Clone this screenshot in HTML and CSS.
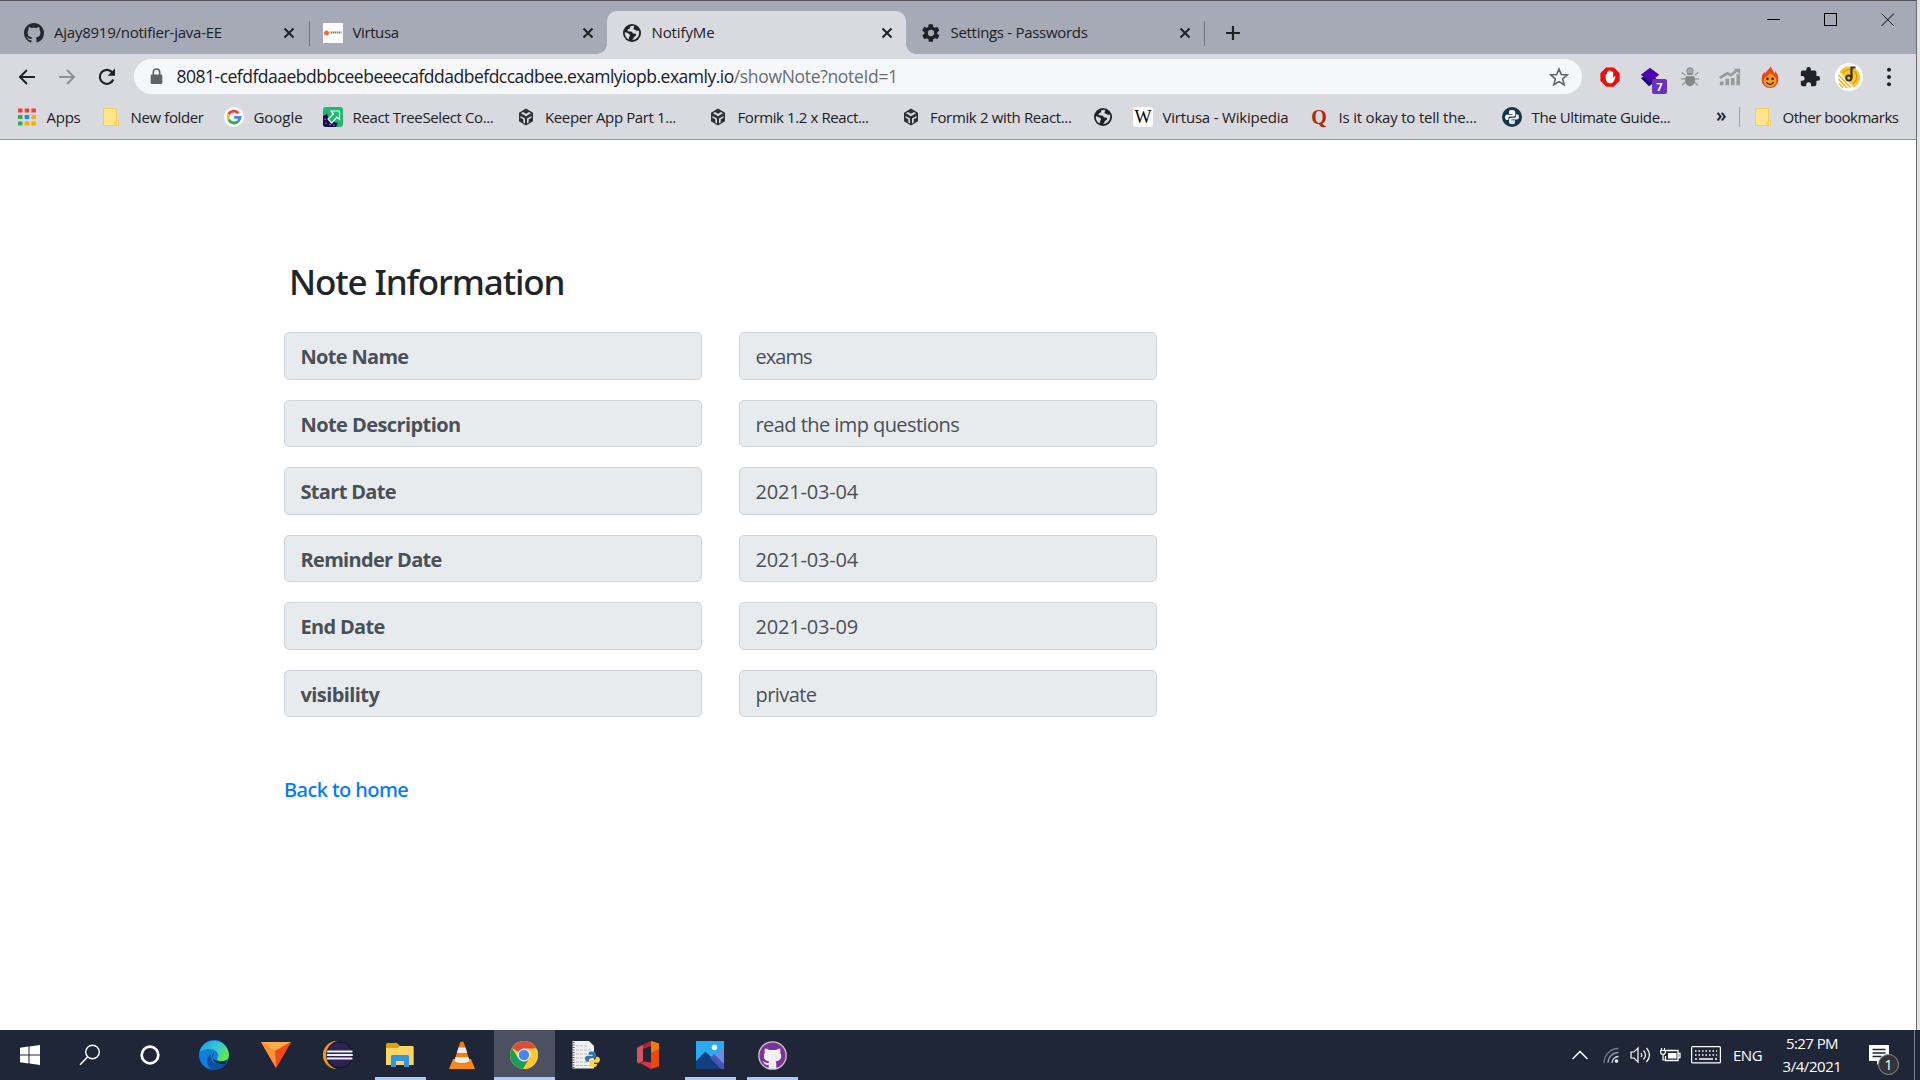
FILE: index.html
```
<!DOCTYPE html>
<html lang="en">
<head>
<meta charset="utf-8">
<title>NotifyMe</title>
<link rel="stylesheet" href="styles.css">
</head>
<body>
<svg class="defs" aria-hidden="true">
  <defs>
    <symbol id="cat" viewBox="0 0 16 16"><path d="M8 0C3.58 0 0 3.58 0 8c0 3.54 2.29 6.53 5.47 7.59.4.07.55-.17.55-.38 0-.19-.01-.82-.01-1.49-2.01.37-2.53-.49-2.69-.94-.09-.23-.48-.94-.82-1.13-.28-.15-.68-.52-.01-.53.63-.01 1.08.58 1.23.82.72 1.21 1.87.87 2.33.66.07-.52.28-.87.51-1.07-1.78-.2-3.64-.89-3.64-3.95 0-.87.31-1.59.82-2.15-.08-.2-.36-1.02.08-2.12 0 0 .67-.21 2.2.82.64-.18 1.32-.27 2-.27s1.36.09 2 .27c1.53-1.04 2.2-.82 2.2-.82.44 1.1.16 1.92.08 2.12.51.56.82 1.27.82 2.15 0 3.07-1.87 3.75-3.65 3.95.29.25.54.73.54 1.48 0 1.07-.01 1.93-.01 2.2 0 .21.15.46.55.38A8.01 8.01 0 0 0 16 8c0-4.42-3.58-8-8-8z"/></symbol>
    <symbol id="globe" viewBox="0 0 20 20"><circle cx="10" cy="10" r="9" fill="#202124"/><path d="M11 2.800c-2.600 0-3 .9-3 2 0 1.300-2 1-2.400 2.200-.3 1.100.8 1.500 2.200 1.500 1.900 0 2.900.5 2.900 1.900h2.100c.9 0 1.700.9 1.200 1.900-.6 1.200-2.100 1.300-2.500 2.700-.3 1.100-.9 2-2.300 2.100A7.200 7.200 0 0 0 17.200 10c0-1-.2-1.900-.6-2.800-.8.8-2 .9-2.800.1-.8-.9-2.200-.6-2.300-1.800-.1-.9.900-1.300.8-2.500z" fill="#d9dadf"/><path d="M2.900 9c1.300 1 3.500 1.200 4.600 2.200 1 .9.300 2-.3 2.700-.6.8 0 1.800-.4 2.600A7.200 7.200 0 0 1 2.900 9z" fill="#d9dadf"/></symbol>
    <symbol id="close" viewBox="0 0 12 12"><path d="M1.500 1.500l9 9m0-9l-9 9" stroke="#202124" stroke-width="2" fill="none"/></symbol>
    <symbol id="folder" viewBox="0 0 20 20"><path d="M2.500 1.500h13v12h2v5h-15z" fill="#ffe58c" stroke="#f2cd5c"/><path d="M15.500 13.500v5h-2v-3z" fill="#f7d566" stroke="#f2cd5c" stroke-width=".7"/></symbol>
    <symbol id="sandbox" viewBox="0 0 20 20"><path d="M10 1.500l7 4.200v8.600L10 18.500l-7-4.200V5.700z" fill="#303134"/><path d="M10 9.200L5 6.300l2-1.200 3 1.700 3-1.700 2 1.200zM9 11.500v5l-1.700-1v-3.200L4.500 10.700V9zM11 11.500v5l1.700-1v-3.200l2.800-1.600V9z" fill="#d9dadf"/></symbol>
  </defs>
</svg>

<div class="screen">
  <div class="window">
    <header class="tabstrip">
      <div class="tab">
        <svg class="favicon" viewBox="0 0 20 20"><use href="#cat" fill="#24292e"/></svg>
        <span class="tab-title sp-24">Ajay8919/notifier-java-EE</span>
        <svg class="tab-close"><use href="#close"/></svg>
      </div>
      <div class="tab tab-divided">
        <svg class="favicon" viewBox="0 0 20 20"><rect width="20" height="20" fill="#fff"/><circle cx="3.500" cy="10" r="2.500" fill="#ee6b3a"/><path d="M7.500 9.500h11" stroke="#777" stroke-width="2" stroke-dasharray="1.500 .6"/></svg>
        <span class="tab-title sp-40">Virtusa</span>
        <svg class="tab-close"><use href="#close"/></svg>
      </div>
      <div class="tab tab-active">
        <svg class="favicon"><use href="#globe"/></svg>
        <span class="tab-title sp-12">NotifyMe</span>
        <svg class="tab-close"><use href="#close"/></svg>
      </div>
      <div class="tab tab-last">
        <svg class="favicon" viewBox="0 0 24 24"><path fill="#202124" d="M19.400 13c.1-.3.1-.7.1-1s0-.7-.1-1l2.300-1.700c.2-.1.300-.4.100-.7l-2.100-3.700c-.1-.2-.4-.3-.6-.2l-2.600 1.100c-.6-.4-1.200-.8-1.800-1l-.4-2.800c0-.2-.2-.4-.5-.4h-4.200c-.3 0-.5.2-.5.4l-.4 2.800c-.7.300-1.300.6-1.800 1L4.300 4.700c-.2-.1-.5 0-.6.200L1.600 8.600c-.1.200-.1.500.1.700L4.100 11v2l-2.300 1.700c-.2.1-.3.4-.1.700l2.100 3.700c.1.200.4.300.6.200L7 18.200c.6.4 1.200.8 1.800 1l.4 2.800c0 .2.200.4.500.4h4.200c.3 0 .5-.2.500-.4l.4-2.800c.7-.3 1.300-.6 1.800-1l2.600 1.100c.2.1.500 0 .6-.2l2.100-3.700c.1-.2.1-.5-.1-.7zM12 15.800a3.800 3.800 0 1 1 0-7.600 3.800 3.800 0 0 1 0 7.600z"/></svg>
        <span class="tab-title sp-30">Settings - Passwords</span>
        <svg class="tab-close"><use href="#close"/></svg>
      </div>
      <div class="new-tab"><svg width="16" height="16" viewBox="0 0 16 16"><path d="M8 1v14M1 8h14" stroke="#202124" stroke-width="2.200"/></svg></div>
      <div class="window-buttons">
        <svg viewBox="0 0 14 14"><path d="M0 6.500h13" stroke="#000" /></svg>
        <svg viewBox="0 0 14 14"><rect x=".5" y=".5" width="12" height="12" fill="none" stroke="#000"/></svg>
        <svg viewBox="0 0 14 14"><path d="M.5.5l12.500 12.500M13 .5L.5 13" stroke="#000"/></svg>
      </div>
    </header>

    <div class="toolbar">
      <div class="nav">
        <svg viewBox="0 0 20 20"><path d="M18 10H3.500M10 3l-7 7 7 7" fill="none" stroke="#202124" stroke-width="2"/></svg>
        <svg viewBox="0 0 20 20"><path d="M2 10h14.500M10 3l7 7-7 7" fill="none" stroke="#8e9095" stroke-width="2"/></svg>
        <svg viewBox="0 0 20 20"><path d="M16.300 12.500a7 7 0 1 1-.8-6.800" fill="none" stroke="#202124" stroke-width="2.200"/><path d="M18 1.500v7.300h-7.300z" fill="#202124"/></svg>
      </div>
      <div class="omnibox">
        <svg class="lock" viewBox="0 0 12 16"><rect x=".5" y="6" width="11" height="9" rx="1.200" fill="#5f6368"/><path d="M3 6.500V4a3 3 0 0 1 6 0v2.500" fill="none" stroke="#5f6368" stroke-width="1.500"/></svg>
        <span class="url"><span class="host">8081-cefdfdaaebdbbceebeeecafddadbefdccadbee.examlyiopb.examly.io</span><span class="path">/showNote?noteId=1</span></span>
        <svg class="star" viewBox="0 0 20 20"><path d="M10 2l2.300 5.500 5.900.5-4.500 3.900 1.400 5.800L10 14.600l-5.100 3.100 1.400-5.800L1.800 8l5.900-.5z" fill="none" stroke="#5f6368" stroke-width="1.600"/></svg>
      </div>
      <div class="extensions">
        <svg viewBox="0 0 24 24"><path d="M7.800 1.500h8.400L22.500 7.800v8.400l-6.300 6.300H7.800l-6.300-6.300V7.800z" fill="#e90d0d"/><path d="M7.300 9.500v4.200c0 3 2 5.300 4.700 5.300 2.300 0 3.500-1.300 4.500-3.300l1.400-3.400c.4-1-1-1.500-1.500-.6l-1 1.500V7c0-1.200-1.600-1.200-1.600 0V6c0-1.200-1.700-1.200-1.700 0V5.500c0-1.200-1.700-1.200-1.700 0V7c0-1.200-1.600-1.200-1.600 0v2.500c0-1-1.500-1-1.500 0z" fill="#fff"/></svg>
        <div class="ext-counted">
          <svg viewBox="0 0 24 24"><path d="M2 13l10-5 8 7-9 7z" fill="#1c0574"/><path d="M12 2l10 7.500-10 8-10-8z" fill="#4a04b0"/></svg>
          <span class="ext-count">7</span>
        </div>
        <svg viewBox="0 0 24 24"><g stroke="#929292" stroke-width="1.400" fill="none"><path d="M3 7l4 3M21 7l-4 3M2 14h5M17 14h5M3.500 21l4-4M20.500 21l-4-4"/></g><circle cx="12" cy="5.500" r="3.500" fill="#aaa" stroke="#808080"/><ellipse cx="12" cy="15" rx="5.500" ry="7" fill="#868686"/><path d="M7 10.500h10" stroke="#ddd" stroke-width="1.200"/></svg>
        <svg viewBox="0 0 24 24"><path d="M1 13l8-5 4 2 6-5" fill="none" stroke="#9a9a9a" stroke-width="2.800"/><path d="M16 3h7v6z" fill="#9a9a9a"/><path d="M3 21v-4M9 21v-7M15 21v-8M21 21V9" stroke="#9a9a9a" stroke-width="4"/></svg>
        <svg viewBox="0 0 24 24"><path d="M13 0c0 3.500 3.500 5 3.500 8.500.9-.8 1-1.800 1-3 3 3.500 4 6.500 3.500 10a9 8.500 0 0 1-18 0C2.500 11.500 4 9 6 6c0 1.200.2 2 1 2.500C7.500 5 11.500 4 13 0z" fill="#ea4418"/><path d="M12 8c4 2 7 4.500 7 8.500a7 6.300 0 0 1-14 0C5 12.500 9 11.500 12 8z" fill="#ff9d1c"/><circle cx="9.200" cy="14" r="1.500" fill="#422"/><circle cx="14.800" cy="14" r="1.500" fill="#422"/><path d="M8 17.500c1.700 3.500 6.300 3.500 8 0" fill="none" stroke="#422" stroke-width="1.500"/></svg>
        <svg viewBox="0 0 24 24"><path fill="#202124" d="M20.500 11H19V7a2 2 0 0 0-2-2h-4V3.500a2.500 2.500 0 0 0-5 0V5H4a2 2 0 0 0-2 2v3.800h1.500a2.700 2.700 0 0 1 0 5.400H2V20c0 1.100.9 2 2 2h3.800v-1.500a2.700 2.700 0 0 1 5.400 0V22H17a2 2 0 0 0 2-2v-4h1.500a2.500 2.500 0 0 0 0-5z"/></svg>
        <svg class="avatar" viewBox="0 0 28 28"><circle cx="14" cy="14" r="14" fill="#fff"/><path d="M4.500 9a11 11 0 1 1 14 15.500z" fill="#fbc62c"/><path d="M8 10a7.500 7.500 0 1 1 10 10.500" fill="none" stroke="#e0a01c" stroke-width="1.500"/><path d="M3.500 12l12 12.500M3.500 16l8.500 9M4 20.500l4 4" stroke="#f2b31f" stroke-width="1.500"/><circle cx="13.800" cy="15" r="2.600" fill="none" stroke="#33302c" stroke-width="2"/><path d="M16.500 15.500V4.500h4" fill="none" stroke="#33302c" stroke-width="2.200"/></svg>
        <svg viewBox="0 0 24 24"><g fill="#202124"><circle cx="12" cy="4" r="2.200"/><circle cx="12" cy="12" r="2.200"/><circle cx="12" cy="20" r="2.200"/></g></svg>
      </div>
    </div>

    <nav class="bookmarks">
      <a class="bookmark sp-24"><svg viewBox="0 0 20 20"><path d="M1 3.500h18" stroke="#ea4335" stroke-width="4" stroke-dasharray="4.500 2.200"/><path d="M1 10h4.500M1 16.500h4.500" stroke="#34a853" stroke-width="4"/><path d="M7.700 10h4.500" stroke="#1a8cf0" stroke-width="4"/><path d="M14.400 10h4.500M7.700 16.500h4.500M14.400 16.500h4.500" stroke="#fbab05" stroke-width="4"/></svg>Apps</a>
      <a class="bookmark sp-38"><svg><use href="#folder"/></svg>New folder</a>
      <a class="bookmark sp-05"><svg viewBox="0 0 20 20"><circle cx="10" cy="10" r="10" fill="#fff"/><g fill="none" stroke-width="2.800"><path d="M14.500 6.200A6 6 0 0 0 4.700 7.300" stroke="#ea4335"/><path d="M4.700 7.300a6 6 0 0 0 0 5.400" stroke="#fbbc05"/><path d="M4.700 12.700a6 6 0 0 0 9.300 1.800" stroke="#34a853"/><path d="M14 14.500a6 6 0 0 0 2-4.200H10.200" stroke="#4285f4"/></g></svg>Google</a>
      <a class="bookmark sp-38"><svg viewBox="0 0 20 20"><rect width="20" height="20" rx="3" fill="#1db970"/><path d="M0 9l4-2 3 7 8 2-2 4H3a3 3 0 0 1-3-3z" fill="#120a4c"/><path d="M8 4h8.500v8.500l-2.700-2.500-5 6-3.800-4 5.500-5z" fill="#1db970" stroke="#fff" stroke-width="1.200"/><path d="M2 12v.1M3 16v.1M7 17.500v.1M11 18v.1" stroke="#fff" stroke-width="1.200" stroke-linecap="round"/></svg>React TreeSelect Co...</a>
      <a class="bookmark sp-38"><svg><use href="#sandbox"/></svg>Keeper App Part 1...</a>
      <a class="bookmark sp-40"><svg><use href="#sandbox"/></svg>Formik 1.2 x React...</a>
      <a class="bookmark sp-34"><svg><use href="#sandbox"/></svg>Formik 2 with React...</a>
      <a class="bookmark"><svg><use href="#globe"/></svg></a>
      <a class="bookmark sp-20"><span class="wiki">W</span>Virtusa - Wikipedia</a>
      <a class="bookmark sp-20"><span class="quora">Q</span>Is it okay to tell the...</a>
      <a class="bookmark sp-38"><svg viewBox="0 0 20 20"><circle cx="10" cy="10" r="10" fill="#14354c"/><path d="M9.800 3C7 3 7 4.300 7 5.200V7h3.500v.7H5.300C3.500 7.700 3 9 3 10.300S3.700 13 5 13h1.300v-1.500C6.300 10 7.300 9.500 8.500 9.500h3c1 0 1.800-.7 1.800-1.800V5.200C13.300 3.600 11.800 3 9.800 3z" fill="#fff"/><path d="M10.200 17.300c2.800 0 2.800-1.300 2.800-2.200v-1.800H9.500v-.7h5.200c1.800 0 2.300-1.300 2.300-2.600s-.7-2.700-2-2.700h-1v1.500c0 1.500-1 2-2.200 2h-3c-1 0-1.800.7-1.800 1.800v2.500c0 1.600 1.200 2.200 3.200 2.200z" fill="#e4e9ed"/></svg>The Ultimate Guide...</a>
      <span class="overflow">»</span>
      <a class="bookmark sp-48 other"><svg><use href="#folder"/></svg>Other bookmarks</a>
    </nav>

    <main class="page">
      <h2 class="heading">Note Information</h2>
      <div class="fields">
        <div class="field name">Note Name</div><div class="field value tight">exams</div>
        <div class="field name long">Note Description</div><div class="field value">read the imp questions</div>
        <div class="field name">Start Date</div><div class="field value date">2021-03-04</div>
        <div class="field name">Reminder Date</div><div class="field value date">2021-03-04</div>
        <div class="field name">End Date</div><div class="field value date">2021-03-09</div>
        <div class="field name long">visibility</div><div class="field value">private</div>
      </div>
      <a class="back">Back to home</a>
    </main>
  </div>
  <div class="behind"></div>

  <footer class="taskbar">
    <div class="apps">
      <div class="app"><svg width="20" height="20" viewBox="0 0 20 20"><path d="M0 2.800l8.500-1.200v7.900H0zM9.500 1.400L20 0v9.500H9.500zM0 10.500h8.500v7.900L0 17.200zM9.500 10.500H20V20L9.500 18.600z" fill="#fff"/></svg></div>
      <div class="app"><svg width="22" height="22" viewBox="0 0 22 22"><circle cx="13.500" cy="8" r="6.800" fill="none" stroke="#fff" stroke-width="1.400"/><path d="M8.700 12.800L1 20.800" stroke="#fff" stroke-width="1.500"/></svg></div>
      <div class="app cortana"><svg width="22" height="22" viewBox="0 0 22 22"><circle cx="11" cy="11" r="8.300" fill="none" stroke="#fff" stroke-width="2.700"/></svg></div>
      <div class="app"><svg width="30" height="30" viewBox="0 0 30 30"><defs><linearGradient id="eg" x1="0" x2="1" y1=".2" y2=".7"><stop stop-color="#1e9be0"/><stop offset=".5" stop-color="#35c8d8"/><stop offset="1" stop-color="#6ae83c"/></linearGradient></defs><circle cx="15" cy="15" r="15" fill="#0b7fdb"/><path d="M.5 12A15 15 0 0 1 30 15c0 3.500-3 6-7 6-4.500 0-5.600-1.500-4.500-3.300C21 14 17 9 11 9 6 9 2 11 .5 12z" fill="url(#eg)"/><path d="M12 14c-2 8 5 12 15.500 9A15 15 0 0 1 15 30C7 28 6 18 12 14z" fill="#0d4f9e"/><path d="M15 12.500c-3.500 3-1.500 8.500 6 9 3.500.2 6-.8 7.500-1.500l-1.700 3.500c-7 2-13.500-1-13-6.500z" fill="#1f2638"/></svg></div>
      <div class="app"><svg width="30" height="28" viewBox="0 0 30 28"><path d="M0 1h30L15 27z" fill="#fb6a22"/><path d="M0 1h30L14 10z" fill="#ffad49"/><path d="M30 1L15 27l-1-17z" fill="#f5471e"/><path d="M0 1l14 9 1 17z" fill="#ff9138"/></svg></div>
      <div class="app"><svg width="30" height="30" viewBox="0 0 30 30"><path d="M14 1A14 14 0 0 0 13.500 29 14.500 14.500 0 0 1 14 1z" fill="#f7941e"/><circle cx="16.800" cy="15" r="13" fill="#2c2255" stroke="#141020"/><path d="M4 11.500h25.500M3.800 15h26M4 18.500h25.500" stroke="#f0f0f5" stroke-width="2"/></svg></div>
      <div class="app running"><svg width="28" height="26" viewBox="0 0 28 26"><path d="M0 2.500C0 1 1 1 2 1h9l3 3h12c1 0 1.500.5 1.500 1.500V23H0z" fill="#dca209"/><path d="M0 6h12l2-2h12c1 0 1.500.5 1.500 1.500V23H0z" fill="#ffd462"/><path d="M5 25V15c0-1.500.5-2 2-2h14c1.500 0 2 .5 2 2v10h-5v-6h-8v6z" fill="#3793e0"/></svg></div>
      <div class="app"><svg width="28" height="30" viewBox="0 0 28 30"><path d="M5 19h18l4 10H1z" fill="#f68b10"/><path d="M11.500 4.500C12 .5 16 .5 16.500 4.500L22 22c-3 3-13 3-16 0z" fill="#f57a06"/><path d="M10.500 7.500h7l1.700 5.500H8.800zM7.600 17h12.800l1.200 4.200c-3 2.400-12.200 2.400-15.200 0z" fill="#eceaea"/></svg></div>
      <div class="app running current"><svg width="28" height="28" viewBox="0 0 28 28"><circle cx="14" cy="14" r="14" fill="#fcc934"/><path d="M14 14L1.900 7A14 14 0 0 1 26.100 7z" fill="#dd4b3e"/><path d="M1.900 7A14 14 0 0 0 13 28l7-11-6-3-6 3z" fill="#1a9f58"/><path d="M14 7.500h12.300A14 14 0 0 1 13 28l6.500-11z" fill="#fcc934"/><circle cx="14" cy="14" r="6.500" fill="#f2f2f2"/><circle cx="14" cy="14" r="5.200" fill="#4a86f0"/></svg></div>
      <div class="app"><svg width="28" height="28" viewBox="0 0 28 28"><path d="M.5 0H17l5 5v22.500H.5z" fill="#f0f0ee"/><path d="M4 5h12M4 9h15M4 13h12M4 17h10M4 21h12M4 24.500h14" stroke="#b8b8b8" stroke-width="1.200" stroke-dasharray="3 1"/><path d="M1.500 1v26" stroke="#555" stroke-width="2" stroke-dasharray="1 1.500"/><path d="M20 10.500c-3.500 0-3.500 1.300-3.500 3.200h4v1h-5c-3 0-3.500 5.500 0 6h1.500c0-3 1-3.500 3.500-3.500s3.500-.5 3.500-3c0-2.500-.5-3.700-4-3.700z" fill="#3874a8"/><path d="M21.500 26c3.500 0 3.500-1.300 3.500-3.200h-4v-1h4.500c3 0 3.500-5.500 0-6H24c0 2.500-1 3-3.500 3s-3 .8-3 3c0 3 .5 4.200 4 4.200z" fill="#ffd23f"/></svg></div>
      <div class="app"><svg width="24" height="28" viewBox="0 0 24 28"><path d="M1 6.500L15 0v5L7 8v12l-4 2.500L1 20z" fill="#b3262d"/><path d="M1 7l6-3v16l-4.500 2.500L1 21z" fill="#d8555f"/><path d="M4 22l4-1.500 7 1V28z" fill="#e42d45"/><path d="M15 0l8 2.500v23L15 28z" fill="#e64a05"/><path d="M15 0l8 2.500V8l-8 4z" fill="#f27a08"/></svg></div>
      <div class="app running"><svg width="28" height="28" viewBox="0 0 28 28"><path d="M0 0h28v28H0z" fill="#2aaaf0"/><path d="M28 8L15 17l13 11z" fill="#7288e0"/><path d="M0 20l9.500-9.500L27 28H0z" fill="#123f80"/><path d="M14 17l4-4 10 10v5h-3z" fill="#4757b8"/><circle cx="18.500" cy="6.500" r="2.700" fill="#fff"/></svg></div>
      <div class="app running"><svg width="29" height="29" viewBox="0 0 29 29"><circle cx="14.500" cy="14.500" r="13.700" fill="#7a3496" stroke="#cfc5d6" stroke-width="1.300"/><path d="M7 7.500c1.500 0 3 .8 4 1.600h7c1-.8 2.500-1.600 4-1.600.5 1.500.5 3 .2 4 3 6-1.200 8.500-4.700 8.800 1 1 .8 4 .8 7.500h-7.600v-4c-3 .5-4-.5-5-2.300l-1-1.200c1.500 0 3 2.300 6 1.500 0-.6.200-1.100.7-1.500-3.500-.3-7.500-2.800-4.600-8.800-.3-1-.3-2.500.2-4z" fill="#f1eff3"/></svg></div>
    </div>
    <div class="tray">
      <svg class="up" viewBox="0 0 18 10"><path d="M1.500 9L9 1.500 16.500 9" fill="none" stroke="#fff" stroke-width="1.500"/></svg>
      <svg class="wifi" viewBox="0 0 18 18"><g fill="none" stroke="#717786" stroke-width="1.300"><path d="M2 17A14.500 14.500 0 0 1 16.500 2.500"/><path d="M6 17A10.500 10.500 0 0 1 16.500 6.500" stroke="#8d929e"/><path d="M10 17a6.500 6.500 0 0 1 6.500-6.500" stroke="#d5d7dc"/></g><circle cx="14.500" cy="15" r="1.800" fill="#fff"/></svg>
      <svg class="volume" viewBox="0 0 21 18"><path d="M1 6h3l4-4v14l-4-4H1zM11 7q1.500 2 0 4M13.500 4.500q4 4.500 0 9M16.500 2q6 7 0 14" fill="none" stroke="#fff" stroke-width="1.200"/></svg>
      <svg class="battery" viewBox="0 0 21 14"><path d="M6 2.500h12v10H5.500V8M18 5.500h2v4h-2" fill="none" stroke="#fff" stroke-width="1.300"/><path d="M8 5h8.500v5.500H8z" fill="#fff"/><path d="M.7 2.500h4.600v2c0 2.500-4.600 2.500-4.600 0zM1.500 0v2.500M4.500 0v2.500M3 6v6h3" fill="none" stroke="#fff" stroke-width="1.200"/></svg>
      <svg class="keyboard" viewBox="0 0 30 18"><rect x=".6" y=".6" width="28.800" height="16.300" rx="1" fill="none" stroke="#fff" stroke-width="1.200"/><path d="M4 5h22M4 9h22" stroke="#fff" stroke-width="1.500" stroke-dasharray="1.500 2"/><path d="M4 13h2M8 13h14M24 13h2" stroke="#fff" stroke-width="1.400"/></svg>
      <span class="lang">ENG</span>
      <div class="clock"><span class="time">5:27 PM</span><span class="date">3/4/2021</span></div>
      <div class="notifications"><svg width="20" height="20" viewBox="0 0 20 20"><path d="M0 0h20v16h-8l-4 4v-4H0z" fill="#fff"/><path d="M3.500 4.500h13M3.500 8h13M3.500 11.500h9" stroke="#1f2638" stroke-width="1.300"/></svg><span class="count">1</span></div>
    </div>
  </footer>
</div>
</body>
</html>
```
FILE: styles.css
```
* { box-sizing: border-box; }

body {
  margin: 0;
  font-family: "Open Sans", "Noto Sans", sans-serif;
  font-size: 15px;
  color: #202124;
}

svg { display: block; flex: none; }
.defs { position: absolute; width: 0; height: 0; }

.screen {
  width: 1920px;
  height: 1080px;
  overflow: hidden;
  display: grid;
  grid-template: 1030px 50px / 1917px 3px;
}

/* label tracking */
.sp-05 { letter-spacing: -0.05px; }
.sp-12 { letter-spacing: -0.12px; }
.sp-20 { letter-spacing: -0.2px; }
.sp-24 { letter-spacing: -0.24px; }
.sp-30 { letter-spacing: -0.3px; }
.sp-34 { letter-spacing: -0.34px; }
.sp-38 { letter-spacing: -0.38px; }
.sp-40 { letter-spacing: -0.4px; }
.sp-48 { letter-spacing: -0.48px; }

.window {
  display: flex;
  flex-direction: column;
  background: #fff;
  border-top: 1px solid #55525a;
  border-right: 1px solid #6d6d72;
}
.behind { background: #e3e3e5; }

/* tabs */
.tabstrip {
  height: 53px;
  display: flex;
  align-items: flex-end;
  padding-left: 10px;
  background: #a6aab6;
}
.tab {
  position: relative;
  width: 298.5px;
  height: 43px;
  display: flex;
  align-items: center;
  padding: 0 13.5px 0 14px;
}
.tab-active {
  padding-left: 14.5px;
  padding-right: 13px;
  background: #d9dadf;
  border-radius: 10px 10px 0 0;
}
.tab-last { padding-left: 15px; padding-right: 13px; }
.tab-active::before,
.tab-active::after {
  content: "";
  position: absolute;
  bottom: 0;
  width: 10px;
  height: 10px;
}
.tab-active::before { left: -10px; background: radial-gradient(circle at 0 0, transparent 9.5px, #d9dadf 10px); }
.tab-active::after { right: -10px; background: radial-gradient(circle at 100% 0, transparent 9.5px, #d9dadf 10px); }
.tab-divided::before,
.new-tab::before {
  content: "";
  position: absolute;
  left: 0;
  top: 10px;
  width: 1px;
  height: 25px;
  background: #72747e;
}
.favicon { width: 20px; height: 20px; margin-right: 10px; }
.tab-title { flex: 1; padding-bottom: 2px; white-space: nowrap; }
.tab-close { width: 12px; height: 12px; }
.new-tab {
  position: relative;
  height: 43px;
  padding-left: 20.5px;
  display: flex;
  align-items: center;
}
.window-buttons {
  align-self: flex-start;
  display: flex;
  gap: 43px;
  margin: 12px 21px 0 auto;
}
.window-buttons svg { width: 14px; height: 14px; }

/* toolbar */
.toolbar {
  height: 40px;
  padding-bottom: 5px;
  display: flex;
  border-top: 5px solid #d9dadf;
  background: #d9dadf;
}
.toolbar > * { height: 35px; }
.nav {
  width: 134px;
  padding-left: 17px;
  display: flex;
  align-items: center;
  gap: 20px;
}
.nav svg { width: 20px; height: 20px; }
.omnibox {
  width: 1448px;
  border-radius: 18px;
  background: #f6f7fa;
  display: flex;
  align-items: center;
  padding: 0 13px 0 16px;
}
.lock { width: 13px; height: 17px; margin-right: 13.5px; }
.url { flex: 1; padding-bottom: 2px; font-size: 17.5px; white-space: nowrap; }
.host { letter-spacing: -0.5px; }
.path { letter-spacing: -0.32px; color: #6a6e73; }
.star { width: 20px; height: 20px; }
.extensions {
  display: flex;
  align-items: center;
  gap: 18px;
  margin-left: 17px;
}
.extensions svg { width: 22px; height: 22px; }
.extensions .avatar { width: 28px; height: 28px; margin: 0 -3px 0 -4px; }
.ext-counted { position: relative; }
.ext-count {
  position: absolute;
  left: 13px;
  top: 13px;
  width: 15px;
  height: 15px;
  border-radius: 2px;
  background: #6b33bd;
  color: #fff;
  font: 700 11px/15px "Open Sans", sans-serif;
  text-align: center;
}

/* bookmarks */
.bookmarks {
  height: 46px;
  padding-left: 17px;
  display: grid;
  grid-template-columns: 84px 123px 99px 192.5px 192.5px 192.5px 192.5px 40px 176px 193px 210px 27px auto;
  align-items: center;
  background: #d9dadf;
  border-bottom: 1px solid #97989e;
}
.bookmark {
  display: flex;
  align-items: center;
  gap: 9.5px;
  line-height: 20px;
  white-space: nowrap;
}
.bookmark svg { width: 20px; height: 20px; }
.wiki {
  width: 20px;
  height: 20px;
  border-radius: 3px;
  background: #fff;
  color: #000;
  font: 18px/20px "Liberation Serif", serif;
  letter-spacing: 0;
  text-align: center;
}
.quora {
  width: 20px;
  color: #b2260b;
  font: 700 20px/20px "Liberation Serif", serif;
  text-align: center;
}
.overflow { font-size: 19px; font-weight: 600; line-height: 20px; padding: 0 0 4px 4px; }
.other {
  border-left: 1px solid #a1a2a8;
  height: 20px;
  padding-left: 13px;
}

/* note page */
.page { padding: 117px 0 0 284px; color: #212529; }
.heading {
  margin: 0 0 25px;
  padding-left: 5px;
  font-family: "Noto Sans", sans-serif;
  font-size: 35px;
  font-weight: 500;
  line-height: 50px;
  letter-spacing: -1.14px;
}
.fields {
  display: grid;
  grid-template-columns: 418px 418px;
  column-gap: 37px;
  row-gap: 20px;
}
.field {
  height: 47.5px;
  padding-left: 15.5px;
  border: 1px solid #ced4da;
  border-radius: 5px;
  background: #e8ebee;
  color: #495057;
  font-size: 20px;
  line-height: 47px;
}
.name { font-weight: 700; letter-spacing: -0.68px; }
.name.long { letter-spacing: -0.58px; }
.value { letter-spacing: -0.56px; }
.value.tight { letter-spacing: -0.95px; }
.value.date { letter-spacing: -0.19px; }
.back {
  display: block;
  margin-top: 58px;
  color: #007bff;
  font-family: "Noto Sans", sans-serif;
  font-size: 20px;
  font-weight: 500;
  line-height: 30px;
  letter-spacing: -0.56px;
}

/* taskbar */
.taskbar {
  grid-column: 1 / -1;
  display: flex;
  justify-content: space-between;
  background: #1f2638;
  color: #fff;
}
.apps {
  display: grid;
  grid-template-columns: 60px 60px 63px repeat(10, 62px);
}
.app {
  position: relative;
  display: grid;
  place-items: center;
}
.cortana { padding-right: 3px; }
.current { background: linear-gradient(90deg, transparent 1px, #4b5160 1px); }
.app.running::after {
  content: "";
  position: absolute;
  left: 6px;
  right: 5px;
  bottom: 0;
  height: 3px;
  background: #a9cdf8;
}
.app.current::after { left: 1px; right: 0; }
.tray {
  display: flex;
  align-items: center;
}
.up { width: 18px; height: 10px; margin-right: 13px; }
.wifi { width: 18px; height: 18px; margin-right: 10px; }
.volume { width: 21px; height: 18px; margin-right: 9px; }
.battery { width: 21px; height: 14px; margin-right: 10px; }
.keyboard { width: 30px; height: 18px; margin-right: 12px; }
.lang { width: 30px; letter-spacing: -0.5px; }
.clock {
  width: 98px;
  display: grid;
  line-height: 23px;
  text-align: center;
}
.time { letter-spacing: -0.58px; }
.clock .date { letter-spacing: -0.43px; }
.notifications {
  position: relative;
  width: 46px;
  height: 20px;
  margin: 0 5px 0 8px;
}
.count {
  position: absolute;
  left: 9px;
  top: 9px;
  width: 21px;
  height: 21px;
  border: 1px solid #8d8d90;
  border-radius: 50%;
  background: #353539;
  font-size: 14px;
  line-height: 19px;
  text-align: center;
}
.notifications::after {
  content: "";
  position: absolute;
  right: 0;
  top: -15px;
  width: 1px;
  height: 50px;
  background: #7b808c;
}
```
